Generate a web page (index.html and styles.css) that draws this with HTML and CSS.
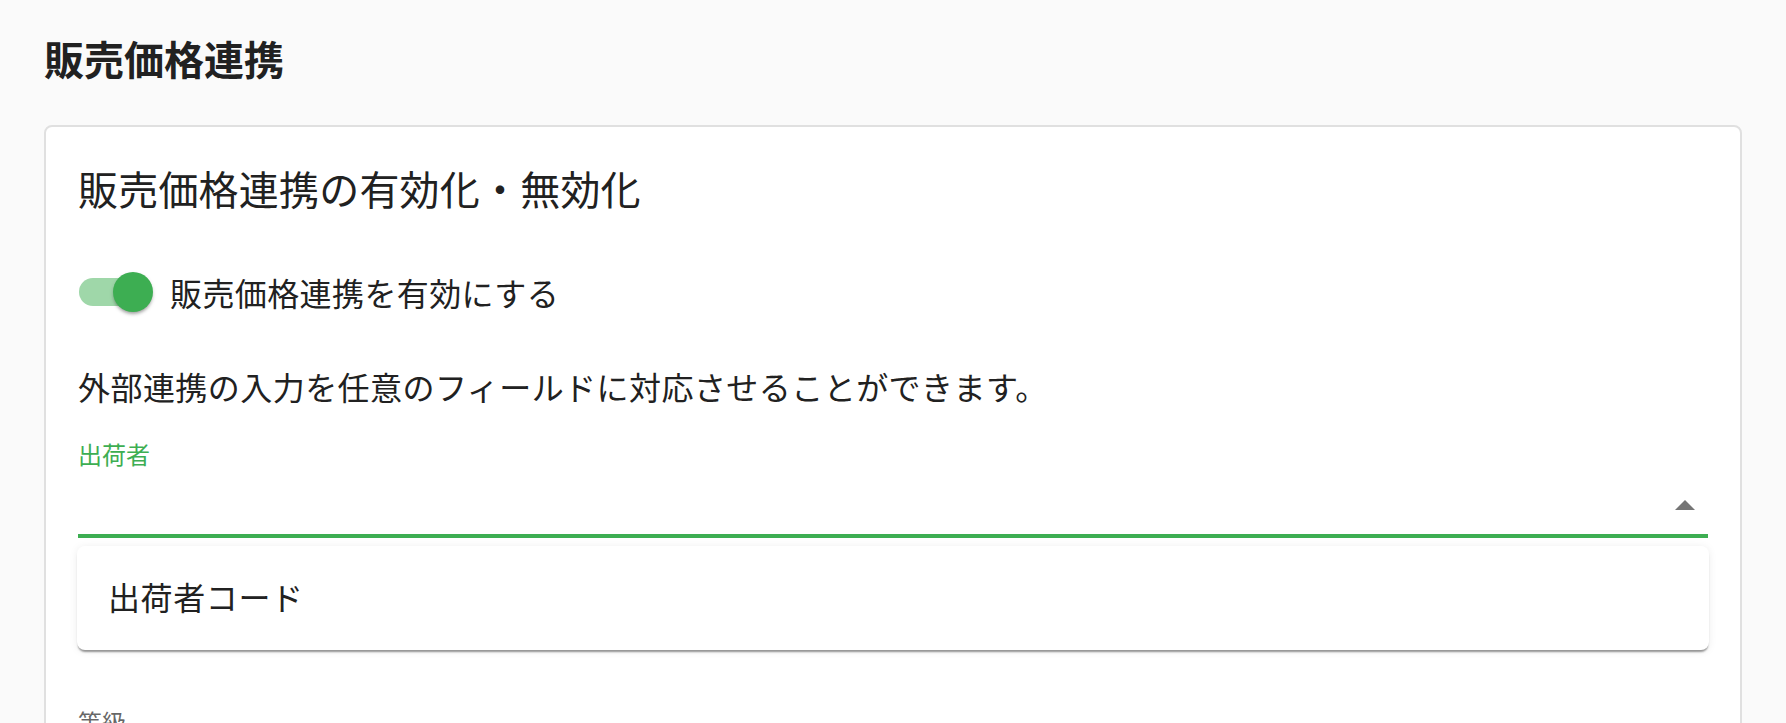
FILE: index.html
```html
<!DOCTYPE html>
<html lang="ja">
<head>
<meta charset="utf-8">
<title>販売価格連携</title>
<link rel="stylesheet" href="styles.css">
</head>
<body>
<div class="page">
  <h1 class="page-title">販売価格連携</h1>
  <section class="card">
    <h2 class="card-title">販売価格連携の有効化・無効化</h2>
    <div class="switch-row">
      <span class="switch">
        <span class="switch-track"></span>
        <span class="switch-thumb"></span>
      </span>
      <span class="switch-label">販売価格連携を有効にする</span>
    </div>
    <p class="desc">外部連携の入力を任意のフィールドに対応させることができます。</p>
    <div class="field field-active">
      <div class="field-label">出荷者</div>
      <div class="field-input">
        <svg class="caret" width="20" height="10" viewBox="0 0 20 10"><path d="M0 10 L10 0 L20 10 Z" fill="#757575"/></svg>
      </div>
      <div class="menu">
        <div class="menu-item">出荷者コード</div>
      </div>
    </div>
    <div class="field field-next">
      <div class="field-label grey">等級</div>
    </div>
  </section>
</div>
</body>
</html>
```
FILE: styles.css
```css
html, body {
  margin: 0;
  padding: 0;
}
body {
  background: #fafafa;
  font-family: "Noto Sans CJK JP", "Noto Sans", sans-serif;
  color: #212121;
  overflow: hidden;
}
.page {
  padding: 38px 44px 0 44px;
}
.page-title {
  margin: 0;
  font-size: 40px;
  line-height: 40px;
  font-weight: 700;
  color: #212121;
}
.card {
  margin-top: 47px;
  background: #fff;
  border: 2px solid #e0e0e0;
  border-radius: 8px;
  padding: 41px 32px 40px 32px;
  min-height: 700px;
}
.card-title {
  margin: 0;
  font-size: 40px;
  line-height: 40px;
  font-weight: 400;
  letter-spacing: 0.2px;
}
.switch-row {
  margin-top: 64px;
  display: flex;
  align-items: center;
  height: 40px;
}
.switch {
  position: relative;
  width: 76px;
  height: 40px;
  flex: none;
  display: flex;
  align-items: center;
}
.switch-track {
  margin-left: 1px;
  width: 72px;
  height: 28px;
  border-radius: 14px;
  background: #9fd7a9;
}
.switch-thumb {
  position: absolute;
  right: 1px;
  top: 0;
  width: 40px;
  height: 40px;
  border-radius: 50%;
  background: #3dae52;
  box-shadow: 0 3px 3px -1px rgba(0,0,0,.25), 0 2px 4px rgba(0,0,0,.14);
}
.switch-label {
  margin-left: 16px;
  font-size: 32px;
  line-height: 32px;
  letter-spacing: 0.4px;
}
.desc {
  margin: 58px 0 0 0;
  font-size: 32px;
  line-height: 32px;
  letter-spacing: 0.45px;
}
.field {
  position: relative;
}
.field-active {
  margin-top: 40px;
  border-bottom: 4px solid #3dae52;
}
.field-label {
  font-size: 24px;
  line-height: 24px;
  color: #3dae52;
}
.field-label.grey {
  color: rgba(0,0,0,.6);
}
.field-input {
  height: 68px;
  display: flex;
  align-items: flex-end;
  justify-content: flex-end;
  padding-right: 13px;
  box-sizing: border-box;
  padding-bottom: 24px;
}
.caret {
  display: block;
}
.menu {
  position: absolute;
  left: -1px;
  right: -1px;
  top: calc(100% + 12px);
  background: #fff;
  border-radius: 8px;
  padding: 4px 0;
  box-shadow: 0 3px 2px -1px rgba(0,0,0,.4), 0 1px 8px rgba(0,0,0,.08);
  z-index: 5;
}
.menu-item {
  height: 96px;
  box-sizing: border-box;
  display: flex;
  align-items: center;
  padding-left: 31px;
  padding-bottom: 4px;
  font-size: 32px;
  line-height: 32px;
  letter-spacing: 0.6px;
  color: #212121;
}
.field-next {
  margin-top: 172px;
}
```
